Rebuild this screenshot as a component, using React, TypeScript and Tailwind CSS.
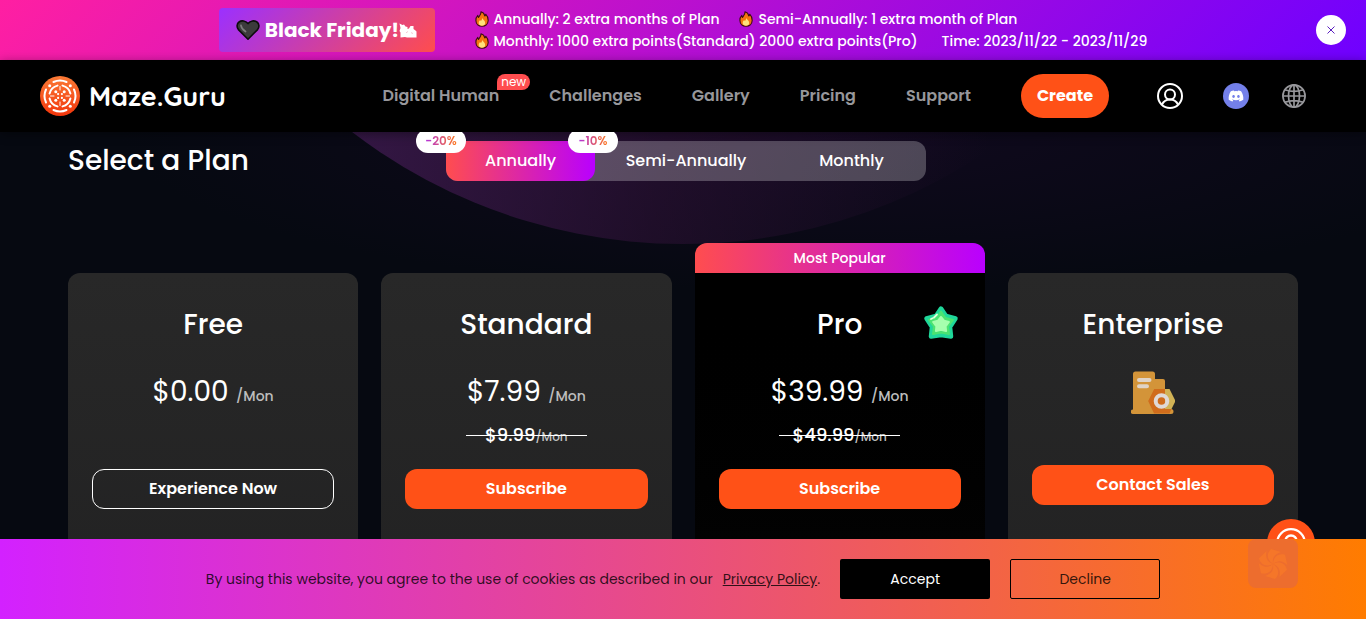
import { useState } from "react";
import { FaDiscord } from "react-icons/fa";
import clsx from "clsx";

const NAV = [
  { label: "Digital Human", href: "#digital-human", isNew: true },
  { label: "Challenges", href: "#challenges" },
  { label: "Gallery", href: "#gallery" },
  { label: "Pricing", href: "#pricing" },
  { label: "Support", href: "#support" },
];

const PERIODS = [
  { label: "Annually", off: "-20%", width: "w-[149px]" },
  { label: "Semi-Annually", off: "-10%", width: "flex-1" },
  { label: "Monthly", width: "w-[149px]" },
];

type Plan = { name: string; price?: string; old?: string; action: string; outlined?: boolean; popular?: boolean };

const PLANS: Plan[] = [
  { name: "Free", price: "$0.00", action: "Experience Now", outlined: true },
  { name: "Standard", price: "$7.99", old: "$9.99", action: "Subscribe" },
  { name: "Pro", price: "$39.99", old: "$49.99", action: "Subscribe", popular: true },
  { name: "Enterprise", action: "Contact Sales" },
];

function Logo() {
  return (
    <svg className="w-10 h-10 shrink-0" viewBox="0 0 40 40" fill="none" aria-hidden="true">
      <defs>
        <linearGradient id="logo" x1="0" y1="0" x2="0" y2="1">
          <stop stopColor="#fb7a35" />
          <stop offset="1" stopColor="#f2360c" />
        </linearGradient>
      </defs>
      <circle cx="20" cy="20" r="20" fill="url(#logo)" />
      {[0, 90, 180, 270].map((a) => (
        <g key={a} transform={`rotate(${a} 20 20)`} stroke="#fff" strokeLinecap="round">
          <path d="M13.5 6a15.3 15.3 0 0 1 13 0" strokeWidth="2" />
          <circle cx="30.300" cy="9.700" r="1.500" fill="#fff" stroke="none" />
          <path d="M22.500 9.600a10.600 10.600 0 0 1 7.900 7.900" strokeWidth="2" />
          <path d="M20 10.500v3.500" strokeWidth="1" />
          <circle cx="24.200" cy="15.800" r="1.500" fill="#fff" stroke="none" />
          <circle cx="21.900" cy="18.100" r="1.100" fill="#fff" stroke="none" />
        </g>
      ))}
    </svg>
  );
}

function Heart() {
  return (
    <svg className="w-6 h-6 shrink-0" viewBox="0 0 24 24" aria-hidden="true">
      <path
        d="M12 21.2 2.4 11.6C.4 9.2.8 5.6 3 4 5.6 2 9.600 2.600 12 5.600 14.400 2.600 18.400 2 21 4c2.200 1.600 2.600 5.200.6 7.600z"
        fill="#3b3b3b"
        stroke="#0c0c0c"
        strokeWidth="1.600"
        strokeLinejoin="round"
      />
      <path d="M5 7.500c.3 2.500 1.800 4.300 4.500 6" stroke="#7d7d7d" strokeWidth="1.800" fill="none" strokeLinecap="round" />
    </svg>
  );
}

function Bags() {
  return (
    <svg className="w-[18px] h-4 shrink-0" viewBox="0 0 18 16" fill="#fff" aria-hidden="true">
      <path d="M.5 1.500l3 1.500 1.500-.5 1.500 2 2 .5v2l1.500-.5 1.500-2.500h3v3l2 1.500 1 1V15.500H8l-2-.5-4.500.5V10.500L.5 9l1-3z" />
      <path d="M7.500 10.500l1-.7M12.500 10.800l1 .5" stroke="#e24a72" strokeWidth=".6" />
    </svg>
  );
}

function Fire() {
  return (
    <svg className="w-[14px] h-4 shrink-0" viewBox="0 0 14 16" aria-hidden="true">
      <path
        d="M6 .8c3 .8 3.500 2.700 3.800 4.200.6-.4.900-1 .9-1.800C12.500 5 13.300 7.200 13.200 9.600 13 13 10.400 15.300 7 15.300S1 13 .9 9.600C.8 7.400 1.600 5.600 2.800 4.400c0 .9.2 1.500.7 2C4.600 4.800 6.300 3.200 6 .8z"
        fill="#f4740f"
        stroke="#3a0c12"
        strokeWidth="1.100"
        strokeLinejoin="round"
      />
      <path d="M7.200 6.800c.3 1.700 3 2.800 3 5.200 0 1.700-1.300 2.700-3.200 2.700s-3.300-1-3.300-2.700c0-1.300.7-2 1.300-2.900.4.5.6.800 1 .9.700-.9 1.200-1.900 1.200-3.200z" fill="#ffe27a" />
    </svg>
  );
}

function UserIcon({ className }: { className?: string }) {
  return (
    <svg className={className} viewBox="0 0 26 26" fill="none" stroke="currentColor" strokeWidth="2" aria-hidden="true">
      <circle cx="13" cy="13" r="12" />
      <circle cx="13" cy="11.500" r="5" />
      <path d="M5 21.500c1.500-3 4.300-5 8-5s6.500 2 8 5" />
    </svg>
  );
}

function GlobeIcon() {
  return (
    <svg className="w-6 h-6" viewBox="0 0 24 24" fill="none" stroke="currentColor" strokeWidth="1.700" aria-hidden="true">
      <circle cx="12" cy="12" r="11.100" />
      <ellipse cx="12" cy="12" rx="5.500" ry="11.100" />
      <path d="M12 .8v22.400M.8 12h22.400M2.800 5.800c5.500 2 12.900 2 18.400 0M2.800 18.200c5.500-2 12.900-2 18.400 0" />
    </svg>
  );
}

function StarGem() {
  return (
    <svg className="w-9 h-9" viewBox="0 0 36 36" aria-hidden="true">
      <g strokeLinejoin="round">
        <path d="M18 3.500l5 7.500 9.500 2.500-5.500 8.500 1 9.500-10-1.500-10 1.500 1-9.500-5.500-8.500L13 11z" fill="#1fd79a" stroke="#1fd79a" strokeWidth="4.500" />
        <path d="M18 6.500l4.500 6.500 7.500 2-5 6.500 1 7.500-8-1.500-8 1.500 1-7.500-5-6.500 7.500-2z" fill="#4be372" stroke="#4be372" strokeWidth="2" />
        <path d="M18 12l3 3.700 4.900 1.300-3.300 4.300.5 4.700-5.100-1.200-5.100 1.200.5-4.700-3.300-4.300 4.900-1.300z" fill="#a6ffae" stroke="#a6ffae" strokeWidth="2" />
      </g>
      <path d="M8 14l1.500-.8M11 12.500l3-3" stroke="#e2ffd9" strokeWidth="1.800" strokeLinecap="round" />
    </svg>
  );
}

function EnterpriseIcon() {
  return (
    <svg className="w-11 h-11" viewBox="0 0 44 44" aria-hidden="true">
      <path d="M2 3a2.500 2.500 0 0 1 2.500-2.500h17A2.500 2.500 0 0 1 24 3v5h8a2 2 0 0 1 2 2v28h6a2.300 2.300 0 0 1 0 5H2a2.200 2.200 0 0 1 0-4.500z" fill="#d39439" />
      <path d="M23 18h15.500l6 12-6 12H23l-6-12z" fill="#d1b255" />
      <path d="M23 18h11v20h6.500l-2 4.500H23L17 30z" fill="#d06c1c" />
      <circle cx="30.500" cy="30" r="5.800" fill="none" stroke="#e0d9d6" strokeWidth="4" />
      <path d="M8 9h10.500M8 15.300h8" stroke="#e0d3c6" strokeWidth="4" strokeLinecap="round" />
    </svg>
  );
}

function Swirl() {
  return (
    <svg className="w-9 h-9" viewBox="0 0 36 36" fill="#ff8024" aria-hidden="true">
      {[0, 60, 120, 180, 240, 300].map((a) => (
        <path key={a} transform={`rotate(${a} 18 18)`} d="M18 18c-6-4-7-10-2-15l10 3c-6 2-9 5-8 12z" opacity=".45" />
      ))}
    </svg>
  );
}

function PromoBanner({ onClose }: { onClose: () => void }) {
  return (
    <div className="relative flex h-[60px] shrink-0 items-center justify-center gap-10 bg-[linear-gradient(135deg,#ff1fa2,#6f00ff)]">
      <div className="flex h-11 w-[216px] items-center justify-center rounded bg-[linear-gradient(135deg,#9b30ff,#ff4d4d)] text-xl font-bold">
        <Heart />
        <span className="ml-[5px]">Black Friday!</span>
        <Bags />
      </div>
      <div className="w-[673px] text-sm leading-[22px] font-medium whitespace-nowrap">
        <p className="flex gap-5">
          <span className="flex items-center gap-[5px]"><Fire />Annually: 2 extra months of Plan</span>
          <span className="flex items-center gap-[5px]"><Fire />Semi-Annually: 1 extra month of Plan</span>
        </p>
        <p className="flex gap-6">
          <span className="flex items-center gap-[5px]"><Fire />Monthly: 1000 extra points(Standard) 2000 extra points(Pro)</span>
          <span>Time: 2023/11/22 - 2023/11/29</span>
        </p>
      </div>
      <button
        onClick={onClose}
        aria-label="Close"
        className="absolute right-5 flex h-[30px] w-[30px] items-center justify-center rounded-full bg-white text-[#5b1fc0]"
      >
        <svg className="h-2 w-2" viewBox="0 0 8 8" stroke="currentColor" aria-hidden="true">
          <path d="M.5.5l7 7M7.500.5l-7 7" />
        </svg>
      </button>
    </div>
  );
}

function Header() {
  return (
    <header className="relative z-10 flex h-[72px] shrink-0 items-center justify-between bg-black pr-[60px] pl-10 shadow-[0_2px_10px_rgba(0,0,0,0.4)]">
      <a href="#home" className="flex items-center gap-[9px] font-[Quicksand,Poppins,Inter,sans-serif] text-[27px] font-bold">
        <Logo />
        Maze.Guru
      </a>
      <div className="flex items-center">
        <nav className="flex items-center gap-[50px] text-base font-semibold text-[#97979b]">
          {NAV.map((item) => (
            <a key={item.label} href={item.href} className="relative">
              {item.label}
              {item.isNew && (
                <span className="absolute -top-[10px] left-full -ml-[2px] h-4 rounded-lg rounded-bl-none bg-[#ff4d4f] px-1 text-xs leading-4 font-normal text-white">
                  new
                </span>
              )}
            </a>
          ))}
          <button className="h-11 rounded-full bg-[#ff5117] px-4 font-bold text-white">Create</button>
        </nav>
        <button aria-label="Account" className="ml-12">
          <UserIcon className="h-[26px] w-[26px]" />
        </button>
        <a href="#discord" aria-label="Discord" className="ml-10 flex h-[26px] w-[26px] items-center justify-center rounded-full bg-[#7480ea]">
          <FaDiscord className="h-4 w-4" />
        </a>
        <button aria-label="Language" className="ml-[33px] text-[#97979b]">
          <GlobeIcon />
        </button>
      </div>
    </header>
  );
}

function PeriodTabs() {
  const [period, setPeriod] = useState("Annually");
  return (
    <div className="flex h-10 w-[480px] gap-[3px] rounded-xl bg-white/25">
      {PERIODS.map((p) => (
        <button
          key={p.label}
          onClick={() => setPeriod(p.label)}
          className={clsx(
            "relative rounded-xl text-base font-medium",
            p.width,
            period === p.label && "bg-[linear-gradient(90deg,#ff4d4f,#b900ff)]"
          )}
        >
          {p.label}
          {p.off && (
            <span className="absolute -top-3 -left-[30px] z-10 flex h-6 w-[50px] items-center justify-center rounded-xl bg-white text-xs font-semibold">
              <span className="bg-[linear-gradient(90deg,#b22fe0,#ff7a1a)] bg-clip-text text-transparent">{p.off}</span>
            </span>
          )}
        </button>
      ))}
    </div>
  );
}

function PlanCard({ plan }: { plan: Plan }) {
  return (
    <div className="flex flex-col">
      <div
        className={clsx(
          "h-[30px] shrink-0 rounded-t-xl text-center text-sm leading-[30px] font-medium",
          plan.popular && "bg-[linear-gradient(90deg,#ff4d4f,#b900ff)]"
        )}
      >
        {plan.popular && "Most Popular"}
      </div>
      <section
        className={clsx(
          "relative flex h-[600px] flex-col items-center px-6 pt-[31px]",
          plan.popular ? "bg-linear-to-b from-black to-[#141414]" : "rounded-t-xl bg-linear-to-b from-[#282828] to-[#1d1d1e]"
        )}
      >
        <h2 className="text-[28px] leading-[42px] font-medium">{plan.name}</h2>
        {plan.popular && (
          <span className="absolute top-8 right-[26px]">
            <StarGem />
          </span>
        )}
        {plan.price ? (
          <>
            <p className="mt-[25px] h-[42px] text-[28px] leading-[42px]">
              {plan.price} <span className="text-sm leading-none font-medium text-[#bdbdbd]">/Mon</span>
            </p>
            <p className="relative mt-[9px] h-[26px] w-[121px] text-center text-[18px] leading-[26px] font-medium whitespace-nowrap">
              {plan.old && (
                <>
                  <s className="no-underline">
                    {plan.old}
                    <span className="text-xs leading-none text-[#c4c4c4]">/Mon</span>
                  </s>
                  <span className="absolute inset-x-0 top-1/2 h-px bg-white" />
                </>
              )}
            </p>
          </>
        ) : (
          <div className="mt-[25px] mb-[29px] h-11">
            <EnterpriseIcon />
          </div>
        )}
        <button
          className={clsx(
            "mt-[21px] h-10 w-full shrink-0 rounded-xl text-base font-semibold",
            plan.outlined ? "border border-white" : "bg-[#ff5117]"
          )}
        >
          {plan.action}
        </button>
      </section>
    </div>
  );
}

function CookieBar({ onDone }: { onDone: () => void }) {
  return (
    <div className="relative z-20 flex h-20 shrink-0 items-center justify-center gap-5 bg-[linear-gradient(90deg,#d321ff,#ff7c00)] text-sm text-black/80">
      <p>
        By using this website, you agree to the use of cookies as described in our
        <a href="#privacy" className="ml-[10px] underline">Privacy Policy</a>.
      </p>
      <button onClick={onDone} className="h-10 w-[150px] rounded-xs bg-black text-white">Accept</button>
      <button onClick={onDone} className="h-10 w-[150px] rounded-xs border border-black">Decline</button>
      <div className="absolute top-0 right-[68px] flex h-[49px] w-[50px] items-center justify-center rounded-lg bg-[#ed6d2e]">
        <Swirl />
      </div>
    </div>
  );
}

export default function App() {
  const [promo, setPromo] = useState(true);
  const [cookies, setCookies] = useState(true);

  return (
    <div className="relative flex h-screen flex-col overflow-hidden bg-[#060911] font-[Poppins,Inter,sans-serif] text-white">
      {promo && <PromoBanner onClose={() => setPromo(false)} />}
      <Header />

      <main className="relative min-h-0 flex-1 overflow-hidden px-[68px] pt-[9px]">
        <div className="absolute inset-0 bg-[radial-gradient(ellipse_700px_160px_at_60%_0,#10091e,transparent)]" />
        <div className="absolute bottom-[calc(100%-112px)] left-1/2 h-[1090px] w-[1090px] -translate-x-1/2 rounded-full bg-[linear-gradient(100deg,rgba(95,38,118,0.6)_20%,rgba(48,18,56,0.55)_55%,transparent_80%)]" />
        <div className="relative flex items-center">
          <h1 className="w-[378px] text-[28px] leading-10 font-medium">Select a Plan</h1>
          <PeriodTabs />
        </div>
        <div className="relative mt-[62px] grid grid-cols-4 gap-[23px]">
          {PLANS.map((plan) => (
            <PlanCard key={plan.name} plan={plan} />
          ))}
        </div>
      </main>

      <button
        aria-label="Help"
        className="absolute right-[51px] bottom-[52px] z-10 flex h-12 w-12 items-center justify-center rounded-full bg-[#ff5117]"
      >
        <UserIcon className="h-[30px] w-[30px]" />
      </button>
      {cookies && <CookieBar onDone={() => setCookies(false)} />}
    </div>
  );
}
